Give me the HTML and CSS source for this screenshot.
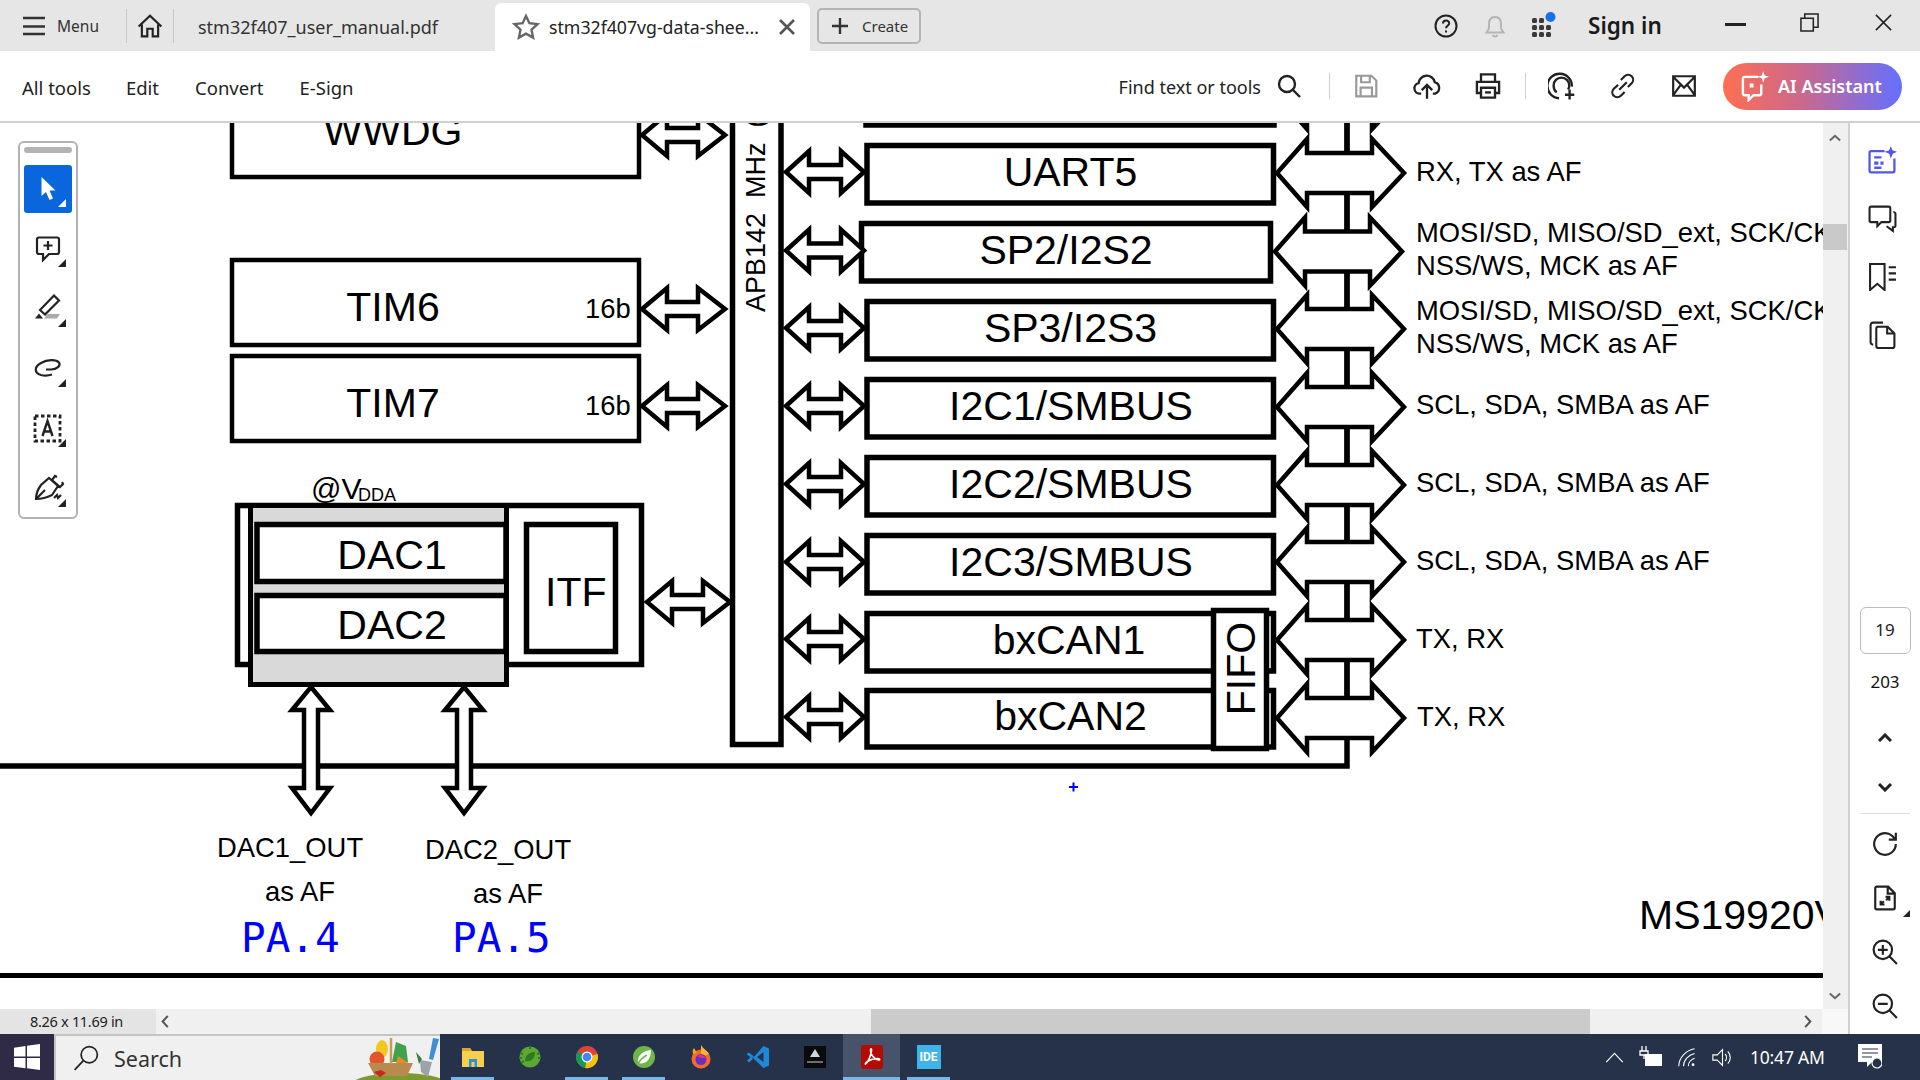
FILE: index.html
```html
<!DOCTYPE html>
<html lang="en">
<head>
<meta charset="utf-8">
<title>stm32f407vg-data-sheet.pdf</title>
<link rel="stylesheet" href="styles.css">
</head>
<body>
<header class="tabbar">
  <div class="menu">
    <svg class="i-menu" viewBox="0 0 22 20"><path d="M0 2H22M0 10.500H22M0 18H22"/></svg>
    <span class="menu-label">Menu</span>
  </div>
  <div class="home">
    <svg class="ic i26" viewBox="0 0 24 24"><path d="M1.500 12.500 12 2.500l10.500 10M4.500 10.500V21.500H9.500V14.500H14.500V21.500H19.500V10.500"/></svg>
  </div>
  <div class="tab">stm32f407_user_manual.pdf</div>
  <div class="tab-active">
    <svg class="ic i28 grey" viewBox="0 0 24 24"><path d="M12 2.500l2.900 6.300 6.900.8-5.100 4.700 1.400 6.800-6.100-3.400-6.100 3.400 1.400-6.800L2.200 9.600l6.900-.8z"/></svg>
    <span class="tab-title">stm32f407vg-data-shee...</span>
    <svg class="i-x" viewBox="0 0 18 18"><path d="M2 2 16 16M16 2 2 16"/></svg>
  </div>
  <div class="create">
    <svg class="i-plus" viewBox="0 0 16 16"><path d="M8 0V16M0 8H16"/></svg>
    <span>Create</span>
  </div>
  <div class="tab-right">
    <div class="tb-icon">
      <svg class="ic i24" viewBox="0 0 24 24"><circle cx="12" cy="12" r="10.500"/><path d="M9 9.500c0-4 6.200-4 6.200-.2 0 2.500-3.200 2.500-3.200 5"/><path class="solid" d="M11 16.500h2v2h-2z"/></svg>
    </div>
    <div class="tb-icon">
      <svg class="ic i24 bell" viewBox="0 0 24 24"><path d="M12 3c-4 0-6 3-6 7v4.500L3.500 18.500h17L18 14.500V10c0-4-2-7-6-7zM9.500 21a2.800 2.800 0 0 0 5 0"/></svg>
    </div>
    <div class="tb-icon">
      <svg class="i-apps" viewBox="0 0 26 26">
        <g class="apps-g">
          <rect x="1" y="6" width="5" height="5" rx="1.500"/><rect x="8" y="6" width="5" height="5" rx="1.500"/>
          <rect x="1" y="13" width="5" height="5" rx="1.500"/><rect x="8" y="13" width="5" height="5" rx="1.500"/><rect x="15" y="13" width="5" height="5" rx="1.500"/>
          <rect x="1" y="20" width="5" height="5" rx="1.500"/><rect x="8" y="20" width="5" height="5" rx="1.500"/><rect x="15" y="20" width="5" height="5" rx="1.500"/>
        </g>
        <circle class="apps-dot" cx="19.500" cy="5" r="5"/>
      </svg>
    </div>
    <div class="signin">Sign in</div>
    <div class="win"><span class="win-min"></span></div>
    <div class="win">
      <svg class="i-thin" viewBox="0 0 20 20"><path d="M1 5.500H14V19H1zM5 5V1H19V15H14"/></svg>
    </div>
    <div class="win">
      <svg class="i-thin" viewBox="0 0 20 20"><path d="M2 2 18 18M18 2 2 18"/></svg>
    </div>
  </div>
</header>

<nav class="toolbar">
  <a class="nav nav-1">All tools</a>
  <a class="nav nav-2">Edit</a>
  <a class="nav nav-3">Convert</a>
  <a class="nav nav-4">E-Sign</a>
  <div class="tools">
    <span class="find">Find text or tools</span>
    <div class="find-ic">
      <svg class="ic i24 heavy" viewBox="0 0 24 24"><circle cx="10" cy="10" r="8"/><path d="M16 16l7 7"/></svg>
    </div>
    <span class="vsep"></span>
    <div class="t-icon">
      <svg class="ic i26 pale" viewBox="0 0 24 24"><path d="M3 2.500H17L21.500 7V21.500H3zM7.500 2.500V8.500H15.500V2.500M7 21.500V13.500H17.500V21.500"/></svg>
    </div>
    <div class="t-icon">
      <svg class="ic i28" viewBox="0 0 24 24"><path d="M7 18.500H5.500a4.500 4.500 0 0 1-.7-8.900 7 7 0 0 1 13.800-1 5.200 5.200 0 0 1 .4 9.900H17M12 23V11M7.500 15.500 12 11l4.500 4.500"/></svg>
    </div>
    <div class="t-icon">
      <svg class="ic i28" viewBox="0 0 24 24"><path d="M6 8V2H18V8M6 18H2.500V8.500H21.500V18H18M6 13.500H18V22H6z"/><path d="M9.500 17.500h5"/></svg>
    </div>
    <span class="vsep vsep-b"></span>
    <div class="t-icon">
      <svg class="ic i28" viewBox="0 0 24 24"><path d="M9.500 22.500a10.500 10.500 0 1 1 11-10M7.500 17.500C5.500 16 4.800 13.500 4.800 11.500a6.700 6.700 0 0 1 13.400 0c0 1.500-.4 2.500-1 3.500"/><path d="M18.500 15v8.500M14.500 19.500h8"/></svg>
    </div>
    <div class="t-icon">
      <svg class="ic i26" viewBox="0 0 24 24"><path d="M10 6.500l3.500-3.500a4.500 4.500 0 0 1 6.500 6.500L16.500 13M13.500 17.500 10 21a4.500 4.500 0 0 1-6.500-6.500L7.500 11M8.500 15.500l7-7"/></svg>
    </div>
    <div class="t-icon">
      <svg class="ic i26" viewBox="0 0 24 24"><path d="M2 3H22V21H2zM2 3.500l10 10 10-10M2 20.500l7-9.500M22 20.500l-7-9.500"/></svg>
    </div>
    <div class="ai">
      <svg class="ic-w" viewBox="0 0 30 32"><path d="M19 6H5a2 2 0 0 0-2 2V23a2 2 0 0 0 2 2H9V30L14 25H20a2 2 0 0 0 2-2V14"/><path class="ic-fill" d="M24 0l1.500 4.500L30 6l-4.500 1.500L24 12l-1.500-4.500L18 6l4.500-1.500zM10 13h4v4h-4z"/></svg>
      <span>AI Assistant</span>
    </div>
  </div>
</nav>

<div class="workspace">
  <div class="doc-column">
    <div class="doc-row">
      <main class="viewer">
        <svg class="page" viewBox="0 123 1823 886" role="img">
          <defs>
            <polygon id="a-row" points="1,0 24,-21 24,-7 56,-7 56,-21 79,0 56,21 56,7 24,7 24,21"/>
            <polygon id="a-tim" points="1,0 26,-21 26,-7 57,-7 57,-21 84,0 57,21 57,7 26,7 26,21"/>
            <polygon id="a-out" points="1,0 31,-34 31,-20 96,-20 96,-34 128,0 96,34 96,20 31,20 31,34"/>
            <polygon id="a-ver" points="0,0 19,23 7,23 7,101 19,101 0,126 -19,101 -7,101 -7,23 -19,23"/>
          </defs>

          <!-- left timers -->
          <rect class="bx" x="232" y="60" width="407" height="117"/>
          <rect class="bx" x="232" y="260" width="407" height="85"/>
          <rect class="bx" x="232" y="356" width="407" height="85"/>
          <text class="t40 mid" x="393" y="145">WWDG</text>
          <text class="t40 mid" x="393" y="321">TIM6</text>
          <text class="t40 mid" x="393" y="417">TIM7</text>
          <text class="t27" x="585" y="318">16b</text>
          <text class="t27" x="585" y="415">16b</text>
          <use class="ar" href="#a-tim" x="641" y="135"/>
          <use class="ar" href="#a-tim" x="641" y="309"/>
          <use class="ar" href="#a-tim" x="641" y="406"/>

          <!-- APB bus -->
          <rect class="bx5" x="732.500" y="60" width="48.500" height="684.500"/>
          <text class="t28" transform="rotate(-90 765 312)" x="765" y="312" xml:space="preserve">APB142  MHz  (</text>

          <!-- main bus -->
          <path class="ln6" d="M0 766H1347V100"/>

          <!-- peripheral boxes -->
          <rect class="bx5" x="866" y="65" width="408" height="60"/>
          <rect class="bx5" x="867" y="145.500" width="406.500" height="57.500"/>
          <rect class="bx5" x="861.500" y="223.500" width="409" height="57.500"/>
          <rect class="bx5" x="867" y="301.500" width="406.500" height="57.500"/>
          <rect class="bx5" x="867" y="379.500" width="406.500" height="57.500"/>
          <rect class="bx5" x="867" y="457.500" width="406.500" height="57.500"/>
          <rect class="bx5" x="867" y="535.500" width="406.500" height="57.500"/>
          <rect class="bx5" x="867" y="613.500" width="406.500" height="57.500"/>
          <rect class="bx5" x="867" y="690.500" width="406.500" height="56.500"/>
          <rect class="bx5" x="1213.500" y="610.500" width="53" height="138"/>
          <text class="t40 mid" x="1070.500" y="186">UART5</text>
          <text class="t40 mid" x="1066" y="264">SP2/I2S2</text>
          <text class="t40 mid" x="1070.500" y="342">SP3/I2S3</text>
          <text class="t40 mid" x="1071" y="420">I2C1/SMBUS</text>
          <text class="t40 mid" x="1071" y="498">I2C2/SMBUS</text>
          <text class="t40 mid" x="1071" y="576">I2C3/SMBUS</text>
          <text class="t40 mid" x="1069" y="654">bxCAN1</text>
          <text class="t40 mid" x="1070.500" y="730">bxCAN2</text>
          <text class="t40 mid" transform="rotate(-90 1255 668.500)" x="1255" y="668.500">FIFO</text>

          <!-- bus arrows, left -->
          <use class="ar" href="#a-row" x="785" y="172"/>
          <use class="ar" href="#a-row" x="785" y="250.500"/>
          <use class="ar" href="#a-row" x="785" y="328"/>
          <use class="ar" href="#a-row" x="785" y="406"/>
          <use class="ar" href="#a-row" x="785" y="484"/>
          <use class="ar" href="#a-row" x="785" y="562"/>
          <use class="ar" href="#a-row" x="785" y="639"/>
          <use class="ar" href="#a-row" x="785" y="717"/>

          <!-- I/O arrows, right -->
          <use class="ar" href="#a-out" x="1276" y="95"/>
          <use class="ar" href="#a-out" x="1276" y="173"/>
          <use class="ar" href="#a-out" x="1274" y="251.500"/>
          <use class="ar" href="#a-out" x="1276" y="329"/>
          <use class="ar" href="#a-out" x="1276" y="407"/>
          <use class="ar" href="#a-out" x="1276" y="485"/>
          <use class="ar" href="#a-out" x="1276" y="562"/>
          <use class="ar" href="#a-out" x="1276" y="640"/>
          <use class="ar" href="#a-out" x="1276" y="718"/>
          <path class="ln5" d="M1347 115V153M1347 193V231M1347 271V309M1347 349V387M1347 427V465M1347 505V542M1347 582V620M1347 660V698"/>

          <text class="t27" x="1416" y="181">RX, TX as AF</text>
          <text class="t27" x="1416" y="242">MOSI/SD, MISO/SD_ext, SCK/CK</text>
          <text class="t27" x="1416" y="275">NSS/WS, MCK as AF</text>
          <text class="t27" x="1416" y="320">MOSI/SD, MISO/SD_ext, SCK/CK</text>
          <text class="t27" x="1416" y="353">NSS/WS, MCK as AF</text>
          <text class="t27" x="1416" y="414">SCL, SDA, SMBA as AF</text>
          <text class="t27" x="1416" y="492">SCL, SDA, SMBA as AF</text>
          <text class="t27" x="1416" y="570">SCL, SDA, SMBA as AF</text>
          <text class="t27" x="1416" y="648">TX, RX</text>
          <text class="t27" x="1417" y="726">TX, RX</text>

          <!-- DAC block -->
          <text class="t30" x="311" y="499">@V</text>
          <text class="t20" x="358" y="501">DDA</text>
          <rect class="bx5" x="237.500" y="505.500" width="404" height="159"/>
          <rect class="bxg" x="250.500" y="505.500" width="256" height="179"/>
          <rect class="bx5" x="257" y="524.500" width="249" height="57"/>
          <rect class="bx5" x="257" y="595.500" width="249" height="56"/>
          <rect class="bx5" x="526.500" y="524.500" width="89" height="127"/>
          <text class="t40 mid" x="392" y="569">DAC1</text>
          <text class="t40 mid" x="392" y="639">DAC2</text>
          <text class="t40" x="545" y="606">ITF</text>
          <use class="ar" href="#a-tim" x="646" y="602"/>
          <use class="ar" href="#a-ver" x="311" y="687"/>
          <use class="ar" href="#a-ver" x="464" y="687"/>

          <text class="t27" x="217" y="857">DAC1_OUT</text>
          <text class="t27" x="425" y="859">DAC2_OUT</text>
          <text class="t27" x="265" y="901">as AF</text>
          <text class="t27" x="473" y="903">as AF</text>
          <text class="pin" x="241" y="952">PA.4</text>
          <text class="pin" x="452" y="952">PA.5</text>
          <path class="cursor" d="M1069 787h9M1073.500 782.500v9"/>

          <text class="t40" x="1639" y="929">MS19920V</text>
          <path class="ln5" d="M0 975.500H1823"/>
        </svg>

        <aside class="float-tools">
          <div class="grip"></div>
          <div class="tool tool-on">
            <svg viewBox="0 0 48 48"><path class="w" d="M17.500 12V31l4.500-4 3.500 8 3.500-1.500-3.500-8 6 0z"/><path class="w" d="M42 34v8h-8z"/></svg>
          </div>
          <div class="tool">
            <svg viewBox="0 0 48 48"><path class="s" d="M15 12.500H33a2 2 0 0 1 2 2V27a2 2 0 0 1-2 2H25l-6 6V29H15a2 2 0 0 1-2-2V14.500a2 2 0 0 1 2-2zM24 16v9M19.500 20.500h9"/><path class="k" d="M42 34v8h-8z"/></svg>
          </div>
          <div class="tool">
            <svg viewBox="0 0 48 48"><path class="s" d="M16 25 30 10.500l5 5L21 29.500z"/><path class="k" d="M11 33.500l4-5 4 5z"/><path class="g" d="M20 33.500l3.500-4.500H36l-3 4.500z"/><path class="k" d="M42 34v8h-8z"/></svg>
          </div>
          <div class="tool">
            <svg viewBox="0 0 48 48"><path class="s" d="M22 24.500h5c6 0 10-4 8-7-3-3.500-12-3-18 .5-7 4-7 10 0 12 4 1 8 .5 11-.5"/><path class="k" d="M42 34v8h-8z"/></svg>
          </div>
          <div class="tool">
            <svg viewBox="0 0 48 48"><rect class="d" x="11" y="11" width="25" height="25"/><path class="s2" d="M18.500 31 23.500 16 28.500 31M20 26.500h7"/><path class="k" d="M42 34v8h-8z"/></svg>
          </div>
          <div class="tool">
            <svg viewBox="0 0 48 48"><path class="s" d="M25 13 34 21 28 30c-6 3-11 4-16 4 0-6 2-10 5-14zM13 33l8-8M33 12l-2-1-3 4 8 7 3-3-1-2"/><path class="s" d="M30 33l3-3 1 3 3-3"/><path class="k" d="M42 34v8h-8z"/></svg>
          </div>
        </aside>
      </main>
      <div class="vscroll">
        <svg class="chev" viewBox="0 0 14 8"><path d="M1 7 7 1.500 13 7"/></svg>
        <div class="vthumb"></div>
        <svg class="chev chev-end" viewBox="0 0 14 8"><path d="M1 1 7 6.500 13 1"/></svg>
      </div>
    </div>
    <footer class="status">
      <div class="status-label">8.26 x 11.69 in</div>
      <div class="htrack">
        <svg class="hchev" viewBox="0 0 8 14"><path d="M7 1 1.500 7 7 13"/></svg>
        <div class="hthumb"></div>
        <svg class="hchev hchev-end" viewBox="0 0 8 14"><path d="M1 1 6.500 7 1 13"/></svg>
      </div>
      <div class="corner"></div>
    </footer>
  </div>

  <aside class="sidepanel">
    <div class="side-top">
      <div class="side-icon">
        <svg class="i30" viewBox="0 0 28 28"><path class="bl" d="M16 5H3a1.500 1.500 0 0 0-1.500 1.500V24A1.500 1.500 0 0 0 3 25.500H24a1.500 1.500 0 0 0 1.500-1.500V12M6 11h7M6 21h7"/><path class="blf" d="M22 0l1.500 4L28 5.500 24 7.500 22 12l-1.500-4.500L16 5.500 20.500 4zM6 15h4v3H6zM12 15h3v3h-3z"/></svg>
      </div>
      <div class="side-icon">
        <svg class="ic i30" viewBox="0 0 28 28"><path d="M3 2.500H20a1.500 1.500 0 0 1 1.500 1.500V16a1.500 1.500 0 0 1-1.500 1.500H13l-4 4v-4H3A1.500 1.500 0 0 1 1.500 16V4A1.500 1.500 0 0 1 3 2.500zM24.500 8a1.500 1.500 0 0 1 2 1.500V21a1.500 1.500 0 0 1-1.500 1.500h-1v3.500l-6-4.500"/></svg>
      </div>
      <div class="side-icon">
        <svg class="ic i30" viewBox="0 0 28 28"><path d="M2 2H16V27L9 21 2 27zM20 5h7M20 11h7M20 17h7"/></svg>
      </div>
      <div class="side-icon">
        <svg class="ic i30" viewBox="0 0 28 28"><path d="M5 24c-1.500-.3-2.500-1-2.500-2.500V5A2.500 2.500 0 0 1 5 2.500h9.500M9 6.500h10l6.500 6.500v12a2 2 0 0 1-2 2H10a2 2 0 0 1-2-2V8.500a2 2 0 0 1 1-2zM18.500 6.500V13h7"/></svg>
      </div>
    </div>
    <div class="page-box">19</div>
    <div class="page-total">203</div>
    <div class="nav-btn">
      <svg class="nav-chev" viewBox="0 0 14 9"><path d="M1 8 7 2l6 6"/></svg>
    </div>
    <div class="nav-btn">
      <svg class="nav-chev" viewBox="0 0 14 9"><path d="M1 1l6 6 6-6"/></svg>
    </div>
    <div class="side-line"></div>
    <div class="side-btn">
      <svg class="ic i26" viewBox="0 0 24 24"><path d="M22 12a10 10 0 1 1-3.500-7.600L22 8M22 1.500V8h-6.500"/></svg>
    </div>
    <div class="side-btn">
      <svg class="ic i26" viewBox="0 0 24 24"><path d="M4.500 1.500H15l6 6V21a1.500 1.500 0 0 1-1.500 1.500h-15A1.500 1.500 0 0 1 3 21V3a1.500 1.500 0 0 1 1.500-1.500zM14.500 1.500V8H21M8 14.500V18h3.500M16 14.500V11h-3.500M8 18l3-3M16 11l-3 3"/></svg>
      <span class="side-tri"></span>
    </div>
    <div class="side-btn">
      <svg class="ic i26" viewBox="0 0 24 24"><circle cx="10" cy="10" r="8.500"/><path d="M16 16l7 7M10 5.500v9M5.500 10h9"/></svg>
    </div>
    <div class="side-btn">
      <svg class="ic i26" viewBox="0 0 24 24"><circle cx="10" cy="10" r="8.500"/><path d="M16 16l7 7M5.500 10h9"/></svg>
    </div>
  </aside>
</div>

<footer class="taskbar">
  <div class="start">
    <svg class="i-win" viewBox="0 0 26 26"><path d="M0 3.700 11.500 2V12.500H0zM13 1.800 26 0V12.500H13zM0 14H11.500V24.300L0 22.700zM13 14H26V26L13 24.200z"/></svg>
  </div>
  <div class="search">
    <svg class="i-search" viewBox="0 0 24 24"><circle cx="15" cy="9" r="7.500"/><path d="M9.500 14.500 1.500 23"/></svg>
    <span class="search-text">Search</span>
    <svg class="basket" viewBox="0 0 90 44">
      <ellipse cx="50" cy="50" rx="50" ry="13" fill="#7c9a2e"/>
      <ellipse cx="32" cy="13" rx="6" ry="9" fill="#f2c81e"/>
      <path d="M42 26 46 6l10 4 2 16z" fill="#3fa34d"/>
      <circle cx="27" cy="23" r="7.500" fill="#e2552c"/>
      <path d="M48 20l12 8-6 4-8-4z" fill="#ef8a22"/>
      <path d="M18 27H63L57 40H25z" fill="#b98a4e"/>
      <path d="M41 2V28" fill="none" stroke="#c59a5c" stroke-width="2.500"/>
      <path d="M24 36l7-2 5 3-6 4z" fill="#c9261f"/>
      <path d="M83 2l6 1-6 21-4-1z" fill="#3d8fd6"/>
      <path d="M70 24l12 2-4 15-7-5z" fill="#9aa3a8"/>
      <path d="M66 16l6 7-3 5z" fill="#3a7d3a"/>
    </svg>
  </div>
  <div class="apps">
    <div class="app run">
      <svg class="i30t" viewBox="0 0 24 24"><path d="M1 3H9l2 3H23V22H1z" fill="#f6cf4e"/><path d="M1 3H9l2 3H1z" fill="#e0a32a"/><path d="M8 22V14h8v8h-2.500v-5h-3v5z" fill="#2d8fe0"/></svg>
    </div>
    <div class="app">
      <svg class="i30t" viewBox="0 0 24 24"><circle cx="12" cy="12" r="10.500" fill="#5da834"/><path d="M2 8l3 1M1 13l3 0M3 18l3-2M22 8l-3 1M23 13h-3M12 1v3" stroke="#2f7a1f" stroke-width="2"/><path d="M7 16c0-6 5-9 10-9 0 6-3 10-10 9z" fill="#2f7a1f"/></svg>
    </div>
    <div class="app run">
      <svg class="i30t" viewBox="0 0 24 24"><circle cx="12" cy="12" r="11" fill="#db4437"/><path d="M12 12 2.300 17A11 11 0 0 1 2.500 6.500z" fill="#0f9d58"/><path d="M12 12l10.500-3A11 11 0 0 1 10 23z" fill="#f4c20d"/><path d="M2.300 17 12 12l-2 11A11 11 0 0 1 2.300 17z" fill="#0f9d58"/><circle cx="12" cy="12" r="5.500" fill="#fff"/><circle cx="12" cy="12" r="4.300" fill="#4285f4"/></svg>
    </div>
    <div class="app run">
      <svg class="i30t" viewBox="0 0 24 24"><circle cx="12" cy="12" r="11" fill="#70b54a"/><path d="M6 18c-1-8 5-12 13-13 0 9-5 15-13 13z" fill="#fff"/><path d="M5 20C8 15 11 12 15 10" stroke="#70b54a" stroke-width="1.500" fill="none"/></svg>
    </div>
    <div class="app">
      <svg class="i30t" viewBox="0 0 24 24"><circle cx="12" cy="14" r="9.500" fill="#f26a2e"/><path d="M12 0c2 4 6 5 8 9l-8 3z" fill="#ffb52e"/><path d="M4 9c-1-3 0-5 1-6l3 5z" fill="#f9a01b"/><circle cx="12" cy="14.500" r="5.500" fill="#6b2fbf"/><path d="M8 11c3-2 7-1 9 2-3 0-6 0-9-2z" fill="#e13a7a"/></svg>
    </div>
    <div class="app">
      <svg class="i30t" viewBox="0 0 24 24"><path d="M17.500 1 23 3.500v17L17.500 23 7 13zM17.500 7 11 12l6.500 5z" fill="#1f88d8" fill-rule="evenodd"/><path d="M1 8.500l2-1 5 4-2 2-5-4zM1 15.500l4-3.500 2 2-4 3.500z" fill="#1f88d8"/></svg>
    </div>
    <div class="app">
      <svg class="i30t" viewBox="0 0 24 24"><path d="M1 1H23V23H1z" fill="#0a0a0a"/><path d="M12 4l5 8H7z" fill="#cfd6dc"/><path d="M4 17H20" stroke="#8a949c" stroke-width="1.500"/></svg>
    </div>
    <div class="app app-on run">
      <svg class="i30t" viewBox="0 0 24 24"><rect x="1" y="0" width="22" height="24" rx="3" fill="#b30b00"/><path d="M5.500 19c2-1 5-7 6-13 .5-3-1-3-1-.5 0 4 4 9 8 9.500 2 0 1.500-1.500-1-1.500-3 0-7 1-10 3-2 1.300-2.500 3-2 2.500z" fill="none" stroke="#fff" stroke-width="1.600"/></svg>
    </div>
    <div class="app run">
      <div class="ide">IDE</div>
    </div>
  </div>
  <div class="tray">
    <svg class="tr tr-a" viewBox="0 0 20 12"><path d="M1 11 10 1.500 19 11"/></svg>
    <svg class="tr tr-b" viewBox="0 0 24 24"><path d="M3 1v5M7 1v5M1 6H9v4H1zM5 10v4"/><path class="trf" d="M6 9H23V21H6z"/></svg>
    <svg class="tr tr-c" viewBox="0 0 24 24"><path d="M1 23C1 12 10 3 21 1M7 23C7 15 13 9 21 7M13 23c0-4 3-8 8-10"/><circle class="trf" cx="19" cy="21" r="1.800"/></svg>
    <svg class="tr tr-d" viewBox="0 0 24 24"><path d="M1 9H6L12 3V21L6 15H1zM15 8a6 6 0 0 1 0 8M18 5a10 10 0 0 1 0 14"/></svg>
    <span class="clock">10:47 AM</span>
    <svg class="notif" viewBox="0 0 24 26"><path class="nf" d="M0 0H24V18H14l-5 5V18H0z"/><path class="nl" d="M4 5H20M4 9H20M4 13H14"/><circle class="nc" cx="19" cy="19" r="5"/></svg>
  </div>
</footer>
</body>
</html>
```

FILE: styles.css
```css
* { box-sizing: border-box; }
html, body { margin: 0; padding: 0; }
body {
  width: 1920px;
  height: 1080px;
  overflow: hidden;
  display: flex;
  flex-direction: column;
  font-family: "Noto Sans", "Open Sans", sans-serif;
  color: #222;
  background: #fff;
}
svg { display: block; flex: none; }

/* shared icon styling */
.ic { fill: none; stroke: #222; stroke-width: 2; }
.ic .solid { fill: #222; stroke: none; }
.i24 { width: 24px; height: 24px; }
.i26 { width: 26px; height: 26px; }
.i28 { width: 28px; height: 28px; }
.i30 { width: 29px; height: 29px; }
.grey { stroke: #666; }
.pale { stroke: #999; }
.bell { stroke: #b5b5b5; }
.heavy { stroke-width: 2.400; }

/* tab bar */
.tabbar {
  height: 51px;
  flex: none;
  display: flex;
  align-items: center;
  background: #e6e6e6;
}
.menu { display: flex; align-items: center; width: 127px; height: 34px; padding-left: 23px; border-right: 1px solid #c8c8c8; }
.i-menu { width: 22px; height: 20px; fill: none; stroke: #333; stroke-width: 2.600; }
.menu-label { margin-left: 12px; margin-top: 1px; font-size: 15.500px; color: #333; }
.home { display: flex; align-items: center; justify-content: center; width: 47px; height: 34px; border-right: 1px solid #c8c8c8; }
.tab { width: 321px; padding-left: 24px; padding-top: 2px; font-size: 18px; color: #333; }
.tab-active {
  width: 315px;
  height: 48px;
  margin-top: 3px;
  padding-left: 17px;
  display: flex;
  align-items: center;
  background: #fff;
  border-radius: 6px 6px 0 0;
}
.tab-title { margin-left: 9px; width: 229px; font-size: 17.700px; color: #222; white-space: nowrap; }
.i-x { width: 18px; height: 18px; fill: none; stroke: #555; stroke-width: 2.600; }
.create {
  width: 104px;
  height: 36px;
  margin-left: 7px;
  padding-left: 13px;
  display: flex;
  align-items: center;
  gap: 14px;
  border: 2px solid #b4b4b4;
  border-radius: 5px;
  font-size: 15px;
  color: #333;
}
.i-plus { width: 16px; height: 16px; fill: none; stroke: #333; stroke-width: 2.400; }
.tab-right { margin-left: auto; display: flex; align-items: center; }
.tb-icon { width: 49px; display: flex; justify-content: center; }
.i-apps { width: 26px; height: 26px; margin-top: -2px; }
.apps-g { fill: #3a3a3a; }
.apps-dot { fill: #1473e6; }
.signin { margin-left: 20px; margin-right: 39px; width: 71px; font-size: 22.500px; font-weight: 600; color: #1a1a1a; white-space: nowrap; }
.win { width: 74px; height: 40px; display: flex; align-items: center; justify-content: center; margin-top: -6px; }
.win-min { width: 21px; height: 3px; margin-top: 3px; background: #222; }
.i-thin { width: 19px; height: 19px; fill: none; stroke: #222; stroke-width: 1.600; }

/* toolbar */
.toolbar {
  height: 72px;
  flex: none;
  display: flex;
  align-items: center;
  background: #fff;
  border-bottom: 2px solid #d0d0d0;
}
.nav { font-size: 18.500px; margin-top: 2px; color: #222; white-space: nowrap; }
.nav-1 { margin-left: 22px; }
.nav-2 { margin-left: 35px; }
.nav-3 { margin-left: 36px; }
.nav-4 { margin-left: 36px; }
.tools { margin-left: auto; display: flex; align-items: center; padding-right: 18px; }
.find { font-size: 18px; margin-top: 1px; color: #222; white-space: nowrap; }
.find-ic { width: 40px; margin-left: 8px; display: flex; justify-content: center; }
.vsep { width: 1px; height: 26px; background: #cfcfcf; margin-left: 20px; margin-right: 5px; }
.vsep-b { margin-left: 7px; }
.t-icon { width: 61px; display: flex; justify-content: center; }
.ai {
  width: 179px;
  height: 47px;
  margin-left: 9px;
  padding-left: 17px;
  display: flex;
  align-items: center;
  gap: 9px;
  border-radius: 24px;
  background: linear-gradient(90deg, #ff6f52 0%, #c9688f 45%, #6470ff 100%);
  color: #fff;
  font-size: 18px;
  font-weight: 600;
  white-space: nowrap;
}
.ic-w { width: 29px; height: 31px; fill: none; stroke: #fff; stroke-width: 2.500; }
.ic-fill { fill: #fff; stroke: none; }

/* workspace */
.workspace { flex: 1; min-height: 0; display: flex; }
.doc-column { width: 1850px; flex: none; display: flex; flex-direction: column; }
.doc-row { flex: 1; min-height: 0; display: flex; }
.viewer { position: relative; width: 1823px; flex: none; overflow: hidden; background: #fff; }
.page { width: 1823px; height: 886px; }

/* diagram */
.page text { font-family: "Liberation Sans", Arial, sans-serif; fill: #000; }
.t40 { font-size: 41px; }
.t30 { font-size: 30px; }
.t28 { font-size: 27px; }
.t27 { font-size: 27.400px; }
.t20 { font-size: 18px; }
.mid { text-anchor: middle; }
.bx { fill: #fff; stroke: #000; stroke-width: 4.500; }
.bx5 { fill: #fff; stroke: #000; stroke-width: 5.500; }
.bxg { fill: #d9d9d9; stroke: #000; stroke-width: 5; }
.ar { fill: #fff; stroke: #000; stroke-width: 4.500; }
.ln5 { fill: none; stroke: #000; stroke-width: 5; }
.ln6 { fill: none; stroke: #000; stroke-width: 5.500; }
.cursor { fill: none; stroke: #0000ff; stroke-width: 2; }
.page .pin { font-family: "DejaVu Sans Mono", monospace; font-size: 41px; fill: #0000ff; }

/* floating tool strip */
.float-tools {
  position: absolute;
  left: 18px;
  top: 18px;
  width: 60px;
  height: 378px;
  padding: 4px;
  display: flex;
  flex-direction: column;
  gap: 12px;
  background: #fff;
  border: 2px solid #b3b3b3;
  border-radius: 6px;
}
.grip { width: 48px; height: 6px; flex: none; background: #b3b3b3; border-radius: 3px; }
.tool { width: 48px; height: 48px; flex: none; border-radius: 3px; }
.tool svg { width: 48px; height: 48px; }
.tool-on { background: #0a66dd; }
.w { fill: #fff; }
.k { fill: #222; }
.g { fill: #aaa; }
.s { fill: none; stroke: #222; stroke-width: 2.200; }
.s2 { fill: none; stroke: #222; stroke-width: 2.400; }
.d { fill: none; stroke: #222; stroke-width: 2.800; stroke-dasharray: 3.500 2.500; }

/* vertical scroller */
.vscroll {
  width: 27px;
  flex: none;
  display: flex;
  flex-direction: column;
  align-items: center;
  padding: 11px 2px 9px 0;
  background: #f0f0f0;
  border-right: 2px solid #d0d0d0;
}
.chev { width: 12px; height: 8px; fill: none; stroke: #666; stroke-width: 2.400; }
.chev-end { margin-top: auto; }
.vthumb { width: 25px; height: 26px; margin-top: 82px; background: #c9c9c9; }

/* status line */
.status { height: 25px; flex: none; display: flex; background: #f0f0f0; }
.status-label { width: 156px; padding-left: 30px; background: #e4e4e4; font-size: 14.500px; line-height: 24px; color: #222; white-space: nowrap; letter-spacing: -0.3px; }
.htrack { flex: 1; display: flex; align-items: center; }
.hchev { width: 8px; height: 13px; margin-left: 5px; fill: none; stroke: #555; stroke-width: 2.200; }
.hthumb { width: 719px; height: 25px; margin-left: 702px; background: #cbcbcb; }
.hchev-end { margin-left: auto; margin-right: 10px; }
.corner { width: 28px; background: #f8f8f8; border-right: 2px solid #d0d0d0; }

/* right panel */
.sidepanel { width: 70px; flex: none; display: flex; flex-direction: column; align-items: center; background: #fff; }
.side-top { padding-top: 8px; height: 484px; margin-right: 6px; }
.side-icon { height: 58px; display: flex; align-items: center; justify-content: center; }
.bl { fill: none; stroke: #5258e4; stroke-width: 2.200; }
.blf { fill: #5258e4; }
.page-box { width: 51px; height: 47px; border: 1.500px solid #bdbdbd; border-radius: 6px; font-size: 17px; line-height: 44px; text-align: center; color: #222; }
.page-total { height: 56px; font-size: 17px; line-height: 56px; color: #111; }
.nav-btn { height: 50px; margin-top: 2px; margin-bottom: -2px; display: flex; align-items: center; }
.nav-chev { width: 14px; height: 9px; fill: none; stroke: #222; stroke-width: 3; }
.side-line { width: 49px; height: 1px; flex: none; margin-top: 3px; margin-bottom: 3px; background: #dcdcdc; }
.side-btn { position: relative; height: 54px; width: 50px; flex: none; display: flex; align-items: center; justify-content: center; }
.side-tri { position: absolute; right: 0; bottom: 8px; border-left: 7px solid transparent; border-bottom: 7px solid #222; }

/* taskbar */
.taskbar { height: 46px; flex: none; display: flex; align-items: stretch; background: #25324a; color: #fff; }
.start { width: 54px; display: flex; align-items: center; justify-content: center; background: #2f2b46; }
.i-win { width: 26px; height: 26px; fill: #fff; }
.search {
  width: 386px;
  padding-left: 17px;
  display: flex;
  align-items: center;
  background: #f0f0f0;
  border: 2px solid #c4c4c4;
  border-bottom: 0;
  border-right: 0;
  overflow: hidden;
}
.i-search { width: 26px; height: 26px; fill: none; stroke: #222; stroke-width: 1.600; }
.search-text { margin-left: 15px; font-size: 21.500px; color: #333; }
.basket { width: 90px; height: 44px; margin-left: auto; }
.apps { margin-left: 4px; display: flex; }
.app { position: relative; width: 57px; display: flex; align-items: center; justify-content: center; }
.i30t { width: 24px; height: 24px; }
.run::after { content: ""; position: absolute; left: 7px; right: 7px; bottom: 0; height: 3px; background: #76b9ed; }
.app-on { background: #47536a; }
.app-on::after { left: 0; right: 0; }
.ide { width: 24px; height: 24px; background: #3fb4e8; color: #fff; font-family: "Roboto", sans-serif; font-size: 12px; font-weight: 700; line-height: 24px; text-align: center; }
.tray { margin-left: auto; display: flex; align-items: center; padding-right: 38px; }
.tr { fill: none; stroke: #fff; stroke-width: 1.300; }
.trf { fill: #fff; stroke: none; }
.tr-a { width: 19px; height: 11px; }
.tr-b { width: 24px; height: 24px; margin-left: 15px; }
.tr-c { width: 19px; height: 19px; margin-left: 15px; }
.tr-d { width: 21px; height: 21px; margin-left: 15px; }
.clock { margin-left: 17px; width: 78px; font-size: 17.500px; color: #fff; white-space: nowrap; letter-spacing: -0.2px; }
.notif { width: 24px; height: 26px; margin-left: 30px; }
.nf { fill: #fff; }
.nl { fill: none; stroke: #25324a; stroke-width: 1.200; }
.nc { fill: #25324a; stroke: #fff; stroke-width: 1.200; }
```
